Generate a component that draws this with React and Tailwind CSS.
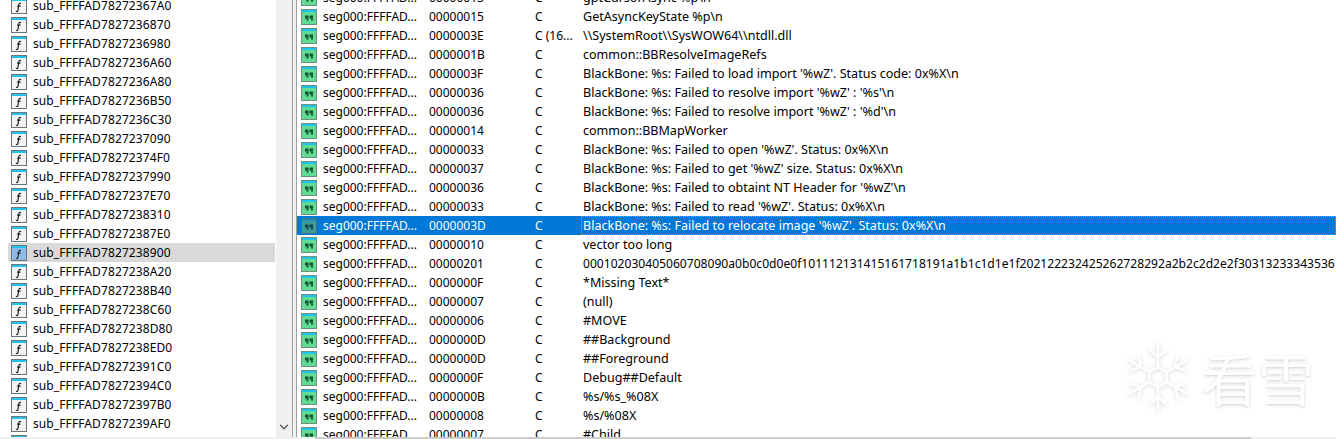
import { ChevronDown } from 'lucide-react'

const functions = [
  '78272367A0', '7827236870', '7827236980', '7827236A60', '7827236A80', '7827236B50',
  '7827236C30', '7827237090', '78272374F0', '7827237990', '7827237E70', '7827238310',
  '78272387E0', '7827238900', '7827238A20', '7827238B40', '7827238C60', '7827238D80',
  '7827238ED0', '78272391C0', '78272394C0', '78272397B0', '7827239AF0', '7827239C10',
]

const HEX = '000102030405060708090a0b0c0d0e0f101112131415161718191a1b1c1d1e1f202122232425262728292a2b2c2d2e2f303132333435363738393a3b3c3d3e3f'

const strings = [
  ['00000013', 'C', 'gptCursorAsync %p\\n'],
  ['00000015', 'C', 'GetAsyncKeyState %p\\n'],
  ['0000003E', 'C (16...', '\\\\SystemRoot\\\\SysWOW64\\\\ntdll.dll'],
  ['0000001B', 'C', 'common::BBResolveImageRefs'],
  ['0000003F', 'C', "BlackBone: %s: Failed to load import '%wZ'. Status code: 0x%X\\n"],
  ['00000036', 'C', "BlackBone: %s: Failed to resolve import '%wZ' : '%s'\\n"],
  ['00000036', 'C', "BlackBone: %s: Failed to resolve import '%wZ' : '%d'\\n"],
  ['00000014', 'C', 'common::BBMapWorker'],
  ['00000033', 'C', "BlackBone: %s: Failed to open '%wZ'. Status: 0x%X\\n"],
  ['00000037', 'C', "BlackBone: %s: Failed to get '%wZ' size. Status: 0x%X\\n"],
  ['00000036', 'C', "BlackBone: %s: Failed to obtaint NT Header for '%wZ'\\n"],
  ['00000033', 'C', "BlackBone: %s: Failed to read '%wZ'. Status: 0x%X\\n"],
  ['0000003D', 'C', "BlackBone: %s: Failed to relocate image '%wZ'. Status: 0x%X\\n"],
  ['00000010', 'C', 'vector too long'],
  ['00000201', 'C', HEX],
  ['0000000F', 'C', '*Missing Text*'],
  ['00000007', 'C', '(null)'],
  ['00000006', 'C', '#MOVE'],
  ['0000000D', 'C', '##Background'],
  ['0000000D', 'C', '##Foreground'],
  ['0000000F', 'C', 'Debug##Default'],
  ['0000000B', 'C', '%s/%s_%08X'],
  ['00000008', 'C', '%s/%08X'],
  ['00000007', 'C', '#Child'],
]

const SELECTED_FN = 13
const SELECTED_STR = 12

function FuncIcon({ selected }) {
  return (
    <svg width="16" height="16" viewBox="0 0 16 16" className="shrink-0">
      <rect x="0.5" y="0.5" width="15" height="15" fill={selected ? '#8dbbe6' : '#f4f4f4'} stroke="#6f7478" />
      <rect x="1" y="1" width="14" height="2" fill="#1fc4ee" />
      <path d="M10 5.5 C8.8 5 8 5.6 7.8 7 L7 12.2 C6.8 13.4 6 13.8 5 13.3 M6 8.2 H9.6" fill="none" stroke="#222" strokeWidth="1.2" />
    </svg>
  )
}

function StrIcon({ selected }) {
  const ink = selected ? '#123f46' : '#14532d'
  return (
    <svg width="16" height="16" viewBox="0 0 16 16" className="shrink-0">
      <rect x="0.5" y="0.5" width="15" height="15" fill={selected ? '#3d9c97' : '#5fdc92'} stroke={selected ? '#3f6f80' : '#6f8f80'} />
      <rect x="1" y="1" width="14" height="2" fill={selected ? '#1f8fc0' : '#1fc4ee'} />
      <rect x="4" y="6.5" width="3.5" height="3" fill={ink} />
      <rect x="8.5" y="6.5" width="3.5" height="3" fill={ink} />
      <rect x="5.5" y="9.5" width="2" height="2" fill={ink} />
      <rect x="10" y="9.5" width="2" height="2" fill={ink} />
    </svg>
  )
}

function Snowflake() {
  const arms = [0, 60, 120, 180, 240, 300]
  return (
    <svg width="72" height="76" viewBox="-36 -38 72 76" className="drop-shadow-[0_1px_2px_rgba(0,0,0,0.16)]">
      {arms.map(a => (
        <g key={a} transform={`rotate(${a})`} stroke="#ffffff" strokeWidth="2.4" fill="none">
          <path d="M0 -11 V-35" />
          <path d="M-9 -28 L0 -20 L9 -28" />
        </g>
      ))}
      <path d="M0 -10 L8.7 -5 V5 L0 10 L-8.7 5 V-5 Z" fill="none" stroke="#ffffff" strokeWidth="2.4" />
    </svg>
  )
}

export default function App() {
  return (
    <div className="relative flex flex-col w-[1336px] h-[439px] overflow-hidden bg-white text-black text-[12px] font-['Noto_Sans',sans-serif]">
      <div className="flex h-[437px] min-h-0">
        {/* functions list */}
        <div className="w-[276px] overflow-hidden pl-2 pr-px">
          <div className="-mt-1">
            {functions.map((f, i) => (
              <div key={f} className={`flex items-center h-[19px] pl-[3px] gap-[6px] ${i === SELECTED_FN ? 'bg-[#d9d9d9]' : ''}`}>
                <FuncIcon selected={i === SELECTED_FN} />
                <span className="whitespace-nowrap tracking-[0.1px]">sub_FFFFAD{f}</span>
              </div>
            ))}
          </div>
        </div>
        <div className="relative w-4 bg-[#f0f0f0]">
          <ChevronDown size={14} strokeWidth={2.5} className="absolute left-px bottom-[3px] text-[#606060]" />
        </div>

        {/* splitter */}
        <div className="w-[5px] bg-[#f0f0f0] border-x border-[#a0a0a0]" />

        {/* strings list */}
        <div className="flex-1 min-w-0 overflow-hidden">
          <div className="-mt-3">
            {strings.map(([len, type, text], i) => {
              const selected = i === SELECTED_STR
              return (
                <div key={i} className={`flex items-center h-[19px] pl-1 whitespace-nowrap ${selected ? 'bg-[#0078d7] text-white' : ''}`}>
                  <StrIcon selected={selected} />
                  <span className="w-[112px] pl-[6px] shrink-0">seg000:FFFFAD...</span>
                  <span className="w-[106px] shrink-0">{len}</span>
                  <span className="w-[46px] shrink-0">{type}</span>
                  <span className={`flex-1 min-w-0 h-[19px] leading-[17px] pl-[1px] overflow-hidden border border-dotted ${text === HEX ? 'text-[12.1px]' : 'text-[12.55px]'} ${selected ? 'border-[#f08a28]' : 'border-transparent'}`}>{text}</span>
                </div>
              )
            })}
          </div>
        </div>
      </div>

      {/* bottom scrollbars */}
      <div className="flex h-[2px] shrink-0 bg-[#f0f0f0]">
        <div className="ml-[315px] w-[936px] bg-[#cdcdcd]" />
      </div>

      {/* watermark */}
      <div className="absolute left-[1122px] top-[339px] flex items-center gap-2">
        <Snowflake />
        <span className="text-[56px] leading-[60px] text-white font-['Noto_Sans_CJK_SC',sans-serif] [text-shadow:0_1px_3px_rgba(0,0,0,0.2)]">看雪</span>
      </div>
    </div>
  )
}
